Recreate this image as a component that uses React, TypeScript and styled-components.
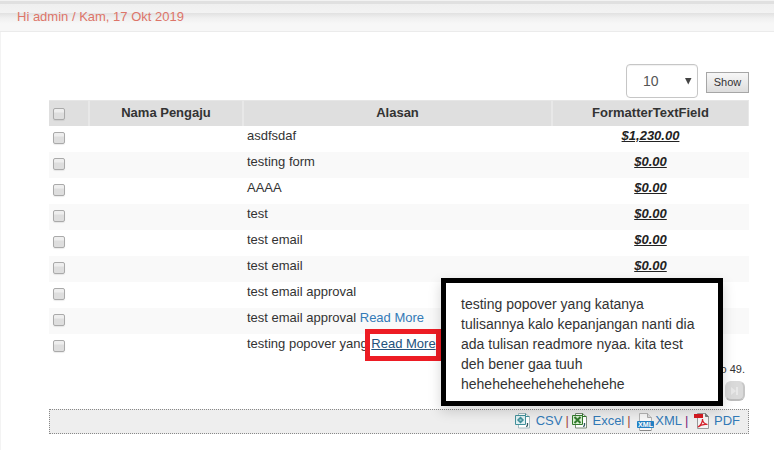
import React from 'react';
import styled, { createGlobalStyle } from 'styled-components';

const GlobalStyle = createGlobalStyle`
  * { box-sizing: border-box; }
  body {
    margin: 0;
    background: #fff;
    color: #333;
    font: 13px/20px "Liberation Sans", Arial, sans-serif;
    overflow: hidden;
  }
`;

const Page = styled.div`
  width: 774px;
  height: 450px;
  overflow: hidden;
  position: relative;
`;

const TopStrip = styled.div`
  height: 13px;
  background: linear-gradient(#f2f2f2 0 1px, #e0e0e0 1px 4px, #efefef 4px, #f3f3f3 13px);
`;

const Greeting = styled.header`
  height: 19px;
  padding: 0 17px;
  line-height: 7px;
  color: #dd7569;
  background: linear-gradient(#e1e1e1, #f0f0f0 5px, #f7f7f7 11px);
  border-bottom: 1px solid #ebebeb;
`;

const Content = styled.main`
  height: 418px;
  padding: 32px 24px 0 48px;
  border-left: 1px solid #f3f3f3;
`;

const Controls = styled.div`
  display: flex;
  justify-content: flex-end;
  gap: 8px;
  height: 36px;
  padding-right: 1px;
`;

const PageSize = styled.div`
  display: flex;
  align-items: center;
  justify-content: space-between;
  width: 72px;
  height: 34px;
  padding: 0 5px 0 16px;
  border: 1px solid #c6c6c6;
  border-radius: 4px;
  box-shadow: inset 0 1px 1px rgba(0, 0, 0, 0.06);
  color: #555;
  font-size: 14px;
`;

const ShowButton = styled.button`
  width: 43px;
  height: 21px;
  margin: 8px 0 0;
  padding: 0;
  border: 1px solid #a6a6a6;
  border-radius: 0;
  background: linear-gradient(#f7f7f7, #ddd);
  color: #333;
  font: 11px/17px "Liberation Sans", Arial, sans-serif;
`;

const Grid = styled.div`
  width: 700px;
`;

const Row = styled.div<{ $striped?: boolean }>`
  display: grid;
  grid-template-columns: 40px 154px 309px 197px;
  height: 26px;
  background: ${(p) => (p.$striped ? '#f9f9f9' : '#fff')};
`;

const HeadRow = styled(Row)`
  background: #dfdfdf;
  font-weight: bold;
  text-align: center;
`;

const HeadCell = styled.div`
  line-height: 23px;
  border-top: 1px solid #e6e6e6;
  border-left: 1px solid #e8e8e8;
  border-right: 1px solid #e8e8e8;
  &:first-child { border-left: 0; }
`;

const Cell = styled.div`
  padding-left: 4px;
  line-height: 19px;
  white-space: nowrap;
`;

const Amount = styled.div`
  line-height: 19px;
  text-align: center;
  font-weight: bold;
  font-style: italic;
  text-decoration: underline;
  color: #222;
`;

const Check = styled.div<{ $head?: boolean }>`
  width: 12px;
  height: 12px;
  margin: ${(p) => (p.$head ? '7px' : '6px')} 0 0 4px;
  border: 1px solid #aaa;
  border-radius: 2px;
  background: linear-gradient(#eee 3px, #dedede 4px);
  box-shadow: 0 1px 1px rgba(0, 0, 0, 0.08);
`;

const Link = styled.a<{ $active?: boolean }>`
  color: ${(p) => (p.$active ? '#23527c' : '#337ab7')};
  text-decoration: ${(p) => (p.$active ? 'underline' : 'none')};
`;

const Highlight = styled.div`
  position: absolute;
  left: 365px;
  top: 329px;
  width: 76px;
  height: 32px;
  border: 5px solid #ed1c24;
`;

const Popover = styled.div`
  position: absolute;
  left: 441px;
  top: 278px;
  width: 282px;
  height: 128px;
  padding: 11px 15px;
  border: 5px solid #000;
  background: #fff;
  box-shadow: 0 5px 12px rgba(0, 0, 0, 0.17);
  font-size: 14px;
  line-height: 20px;
  white-space: nowrap;
`;

const Summary = styled.div`
  height: 20px;
  padding: 0 5px;
  text-align: right;
  font-size: 11px;
  line-height: 18px;
`;

const Pager = styled.div`
  display: flex;
  justify-content: flex-end;
  height: 29px;
  padding: 1px 5px 0 0;
`;

const PagerButton = styled.div`
  display: grid;
  place-items: center;
  width: 20px;
  height: 20px;
  border: 1px solid #dadada;
  border-right: 2px solid #c6c6c6;
  border-bottom: 2px solid #bcbcbc;
  border-radius: 6px;
  background: #dadada;
`;

const ExportBar = styled.div`
  display: flex;
  align-items: center;
  justify-content: flex-end;
  width: 700px;
  height: 25px;
  padding: 0 8px 2px 0;
  border: 1px dotted #888;
  background: #eee;
`;

const ExportItem = styled.div<{ $gap: number; $drop?: number }>`
  display: flex;
  align-items: center;
  gap: ${(p) => p.$gap}px;
  height: 20px;
  svg { flex: none; margin-top: ${(p) => (p.$drop ?? 0) * 2}px; }
`;

const Divider = styled.span<{ $tone: string; $width: number }>`
  width: ${(p) => p.$width}px;
  padding-left: 3px;
  color: ${(p) => p.$tone};
`;

const SheetIcon = ({ color, excel }: { color: string; excel?: boolean }) => (
  <svg width="16" height="16" viewBox="0 0 16 16" fill="none">
    <path d="M3.5.5h7l4 3.5v11h-11z" fill="#fff" stroke={excel ? '#7b8a78' : '#a5bcc0'} />
    <path d="M10.5.5v3h4" stroke={color} />
    <path d="M.5 2.5h10v9H.5z" fill={excel ? '#d7efd0' : '#e0f1f3'} stroke={color} />
    {excel ? (
      <path d="m2.5 4 6 6M8.500 4l-6 6" stroke={color} strokeWidth="2" />
    ) : (
      <path d="m5.500 4.500 2.500 2.500-2.500 2.500L3 7z" fill="#8fc6cc" stroke={color} strokeWidth="1.500" />
    )}
    <path d="M12.500 10v2l-1 2" stroke="#315960" strokeWidth="1.300" />
  </svg>
);

const XmlIcon = () => (
  <svg width="17" height="18" viewBox="0 0 17 18" fill="none">
    <path d="M2.5.5h8l4 4v13h-12z" fill="#f8f8f8" stroke="#b5b5b5" />
    <path d="M10.5.5v4h4" fill="#ddd" stroke="#aaa" />
    <path d="M.5 8.500h16v6H.5z" fill="#2480c3" stroke="#2480c3" />
    <text x="1" y="14" fill="#fff" fontSize="6.400" fontWeight="bold" fontFamily="Liberation Sans" textLength="15" lengthAdjust="spacingAndGlyphs">XML</text>
    <path d="M3 17.500h11" stroke="#888" />
  </svg>
);

const PdfIcon = () => (
  <svg width="16" height="16" viewBox="0 0 16 16" fill="none">
    <path d="M3.5.5h8l3 3v12h-11z" fill="#f4f4f4" stroke="#999" />
    <path d="M11.5.5v3h3" fill="#777" stroke="#777" />
    <path d="M0 1h9v4H0z" fill="#d71920" />
    <path d="M4 14c3-2 4.500-5 4.500-8 0 3 2 5 5 5.500-4-.7-7 .2-9.500 2.500" stroke="#d5202a" strokeWidth="1.200" />
  </svg>
);

const rows = [
  { reason: 'asdfsdaf', amount: '$1,230.00' },
  { reason: 'testing form', amount: '$0.00' },
  { reason: 'AAAA', amount: '$0.00' },
  { reason: 'test', amount: '$0.00' },
  { reason: 'test email', amount: '$0.00' },
  { reason: 'test email', amount: '$0.00' },
  { reason: 'test email approval' },
  { reason: 'test email approval', more: true },
  { reason: 'testing popover yang', more: true, active: true },
];

export default function App() {
  return (
    <Page>
      <GlobalStyle />
      <TopStrip />
      <Greeting>Hi admin / Kam, 17 Okt 2019</Greeting>
      <Content>
        <Controls>
          <PageSize>
            10
            <svg width="7" height="7" viewBox="0 0 7 7"><path d="M0 0h6.500L3.250 6.500z" fill="#444" /></svg>
          </PageSize>
          <ShowButton>Show</ShowButton>
        </Controls>
        <Grid>
          <HeadRow>
            <HeadCell><Check $head /></HeadCell>
            <HeadCell>Nama Pengaju</HeadCell>
            <HeadCell>Alasan</HeadCell>
            <HeadCell>FormatterTextField</HeadCell>
          </HeadRow>
          {rows.map((row, i) => (
            <Row key={i} $striped={i % 2 === 1}>
              <div><Check /></div>
              <div />
              <Cell>
                {row.reason} {row.more && <Link $active={row.active}>Read More</Link>}
              </Cell>
              <Amount>{row.amount}</Amount>
            </Row>
          ))}
        </Grid>
        <Summary>o 49.</Summary>
        <Pager>
          <PagerButton>
            <svg width="8" height="8" viewBox="0 0 8 8"><path d="m0 0 5 4-5 4zM5 0h2v8H5z" fill="#e8e8e8" /></svg>
          </PagerButton>
        </Pager>
        <ExportBar>
          <ExportItem $gap={5}><SheetIcon color="#42919b" /><Link>CSV</Link></ExportItem>
          <Divider $tone="#a14b3e" $width={10}>|</Divider>
          <ExportItem $gap={4}><SheetIcon color="#327b2d" excel /><Link>Excel</Link></ExportItem>
          <Divider $tone="#a14b3e" $width={13}>|</Divider>
          <ExportItem $gap={1} $drop={1}><XmlIcon /><Link>XML</Link></ExportItem>
          <Divider $tone="#81257d" $width={12}>|</Divider>
          <ExportItem $gap={4}><PdfIcon /><Link>PDF</Link></ExportItem>
        </ExportBar>
      </Content>
      <Highlight />
      <Popover>
        testing popover yang katanya<br />
        tulisannya kalo kepanjangan nanti dia<br />
        ada tulisan readmore nyaa. kita test<br />
        deh bener gaa tuuh<br />
        heheheheehehehehehehe
      </Popover>
    </Page>
  );
}
